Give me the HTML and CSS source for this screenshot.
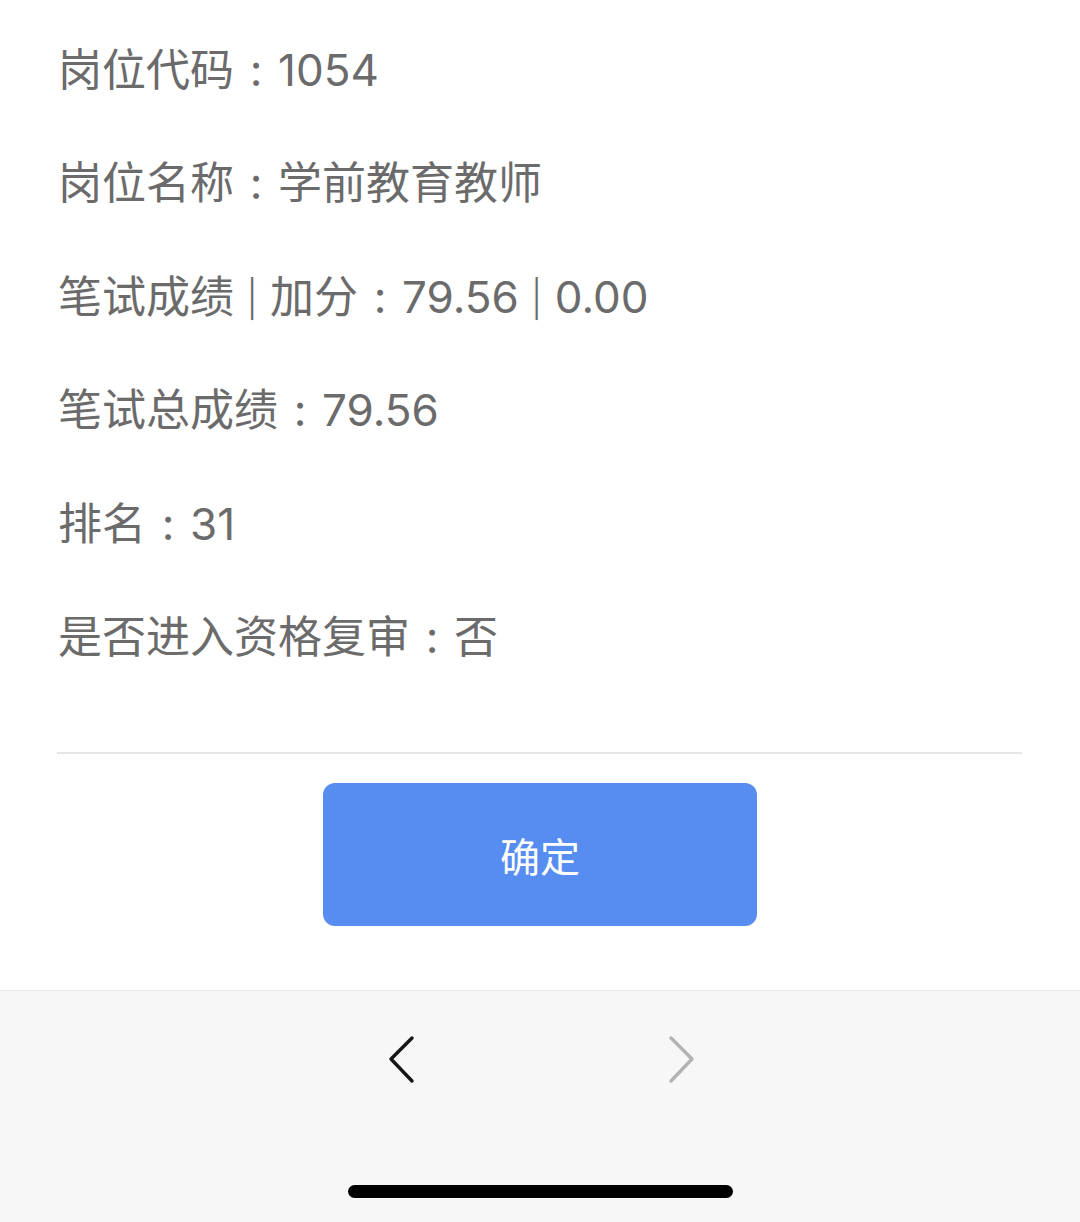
FILE: index.html
```html
<!DOCTYPE html>
<html lang="zh-CN">
<head>
<meta charset="utf-8">
<link rel="stylesheet" href="styles.css">
</head>
<body>
<div class="page">
  <div class="info">
    <div class="row">岗位代码<span class="colon">:</span>1054</div>
    <div class="row">岗位名称<span class="colon">:</span>学前教育教师</div>
    <div class="row">笔试成绩 <span class="bar">|</span> 加分<span class="colon">:</span>79.56 <span class="bar">|</span> 0.00</div>
    <div class="row">笔试总成绩<span class="colon">:</span>79.56</div>
    <div class="row">排名<span class="colon">:</span>31</div>
    <div class="row">是否进入资格复审<span class="colon">:</span>否</div>
  </div>
  <div class="divider"></div>
  <div class="actions">
    <button class="btn">确定</button>
  </div>
  <div class="toolbar">
    <div class="nav">
      <svg class="chev" width="30" height="50" viewBox="0 0 30 50"><path d="M25 3 L4 24 L25 46" fill="none" stroke="#161616" stroke-width="3.4" stroke-linecap="round" stroke-linejoin="round"/></svg>
      <svg class="chev" width="30" height="50" viewBox="0 0 30 50"><path d="M5 3 L26 24 L5 46" fill="none" stroke="#b3b3b3" stroke-width="3.4" stroke-linecap="round" stroke-linejoin="round"/></svg>
    </div>
    <div class="home"></div>
  </div>
</div>
</body>
</html>
```

FILE: styles.css
```css
html, body {
  margin: 0;
  padding: 0;
  background: #ffffff;
}
.page {
  width: 1080px;
  height: 1222px;
  display: flex;
  flex-direction: column;
  font-family: Inter, "Noto Sans CJK SC", sans-serif;
}
.info {
  padding: 14px 58px 0 58px;
}
.row {
  height: 113.4px;
  line-height: 113.4px;
  font-size: 44px;
  color: #6b6b6b;
  white-space: nowrap;
}
.colon {
  display: inline-block;
  width: 44px;
  text-align: center;
}
.bar {
  font-weight: 300;
  font-size: 36px;
  vertical-align: 1px;
}
.divider {
  margin: 58px 58px 0 57px;
  height: 2px;
  background: #e6e6e6;
}
.actions {
  display: flex;
  justify-content: center;
  padding-top: 29px;
  padding-bottom: 64px;
}
.btn {
  width: 434px;
  height: 143px;
  border: none;
  border-radius: 12px;
  background: #578df0;
  color: #ffffff;
  font-family: "Noto Sans CJK SC", sans-serif;
  font-size: 40px;
  padding: 0;
  margin-left: 0;
}
.toolbar {
  flex: 1;
  background: #f7f7f7;
  border-top: 1px solid #e9e9e9;
  display: flex;
  flex-direction: column;
  align-items: center;
}
.nav {
  display: flex;
  gap: 249px;
  margin-top: 44px;
  margin-left: 2px;
}
.chev {
  display: block;
}
.home {
  margin-top: 100px;
  width: 385px;
  height: 13px;
  border-radius: 7px;
  background: #000000;
}
```
